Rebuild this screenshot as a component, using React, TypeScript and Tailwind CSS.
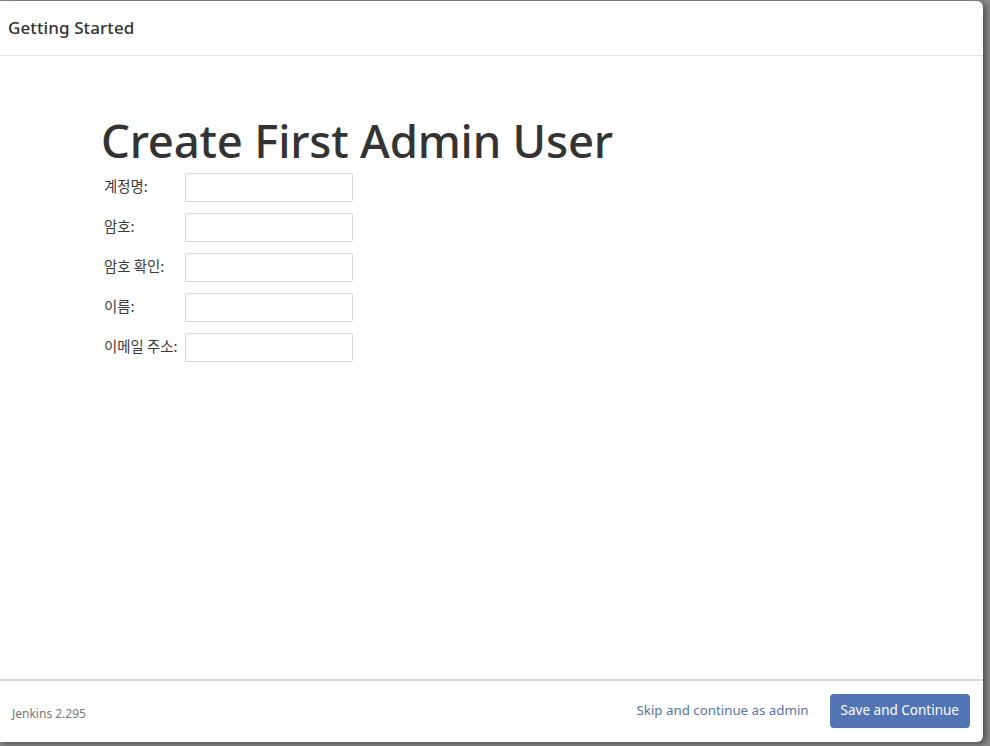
import React from "react";

const fields = ["계정명:", "암호:", "암호 확인:", "이름:", "이메일 주소:"];

export default function App() {
  return (
    <div
      className="h-screen w-full overflow-hidden bg-[#8a8a8a]"
      style={{ fontFamily: '"Noto Sans", "Noto Sans CJK KR", sans-serif' }}
    >
      <div className="mt-px flex h-[741px] w-[983px] flex-col rounded-r-md bg-white shadow-[3px_2px_6px_rgba(0,0,0,0.45)]">
        {/* header */}
        <div className="flex h-[55px] items-center border-b border-[#e5e5e5] px-2">
          <h4 className="text-[17px] font-medium tracking-[0.1px] text-[#333]">Getting Started</h4>
        </div>

        {/* body */}
        <div className="flex-1 pl-[101px] pt-[59px]">
          <h1 className="text-[45.5px] leading-[1.1] font-medium tracking-[-0.2px] text-[#333]">
            Create First Admin User
          </h1>
          <div className="mt-[8px] flex flex-col gap-[11px] pl-[3px]">
            {fields.map((f) => (
              <div key={f} className="flex items-start">
                <label
                  className="w-[81px] pt-[2px] text-[14.4px] text-[#3a3a3a]"
                  style={{ fontFamily: '"Noto Sans CJK KR", sans-serif' }}
                >
                  {f}
                </label>
                <input
                  type={f.startsWith("암호") ? "password" : "text"}
                  className="h-[29px] w-[168px] rounded-[2px] border border-[#d5d5d5] bg-white px-1 text-[13px] outline-none"
                />
              </div>
            ))}
          </div>
        </div>

        {/* footer */}
        <div className="flex h-[63px] items-center justify-between border-t-2 border-[#d8d8d8] pl-3 pr-[13px]">
          <span className="mt-1 text-[12px] text-[#777]">Jenkins 2.295</span>
          <div className="-mt-[2px] flex items-center gap-[21px]">
            <a href="#" className="text-[13.3px] text-[#5573a8]">
              Skip and continue as admin
            </a>
            <button className="h-[34px] rounded-[4px] bg-[#5274b4] px-[11px] text-[13.5px] text-white">
              Save and Continue
            </button>
          </div>
        </div>
      </div>
    </div>
  );
}
